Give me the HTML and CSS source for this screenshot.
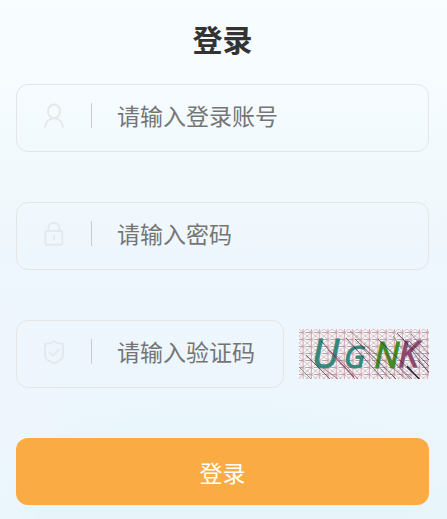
FILE: index.html
```
<!DOCTYPE html>
<html lang="zh-CN">
<head>
  <meta charset="UTF-8">
  <meta name="viewport" content="width=device-width, initial-scale=1.0">
  <title>登录</title>
  <link rel="stylesheet" href="styles.css">
</head>
<body>
  <main class="login">
    <h1 class="login-title">登录</h1>
    <form class="login-form">
      <div class="field">
        <label class="field-icon" for="account" aria-label="登录账号">
          <svg width="22" height="26" viewBox="0 0 22 26">
            <ellipse cx="11" cy="8.3" rx="6" ry="6.9"/>
            <path d="M2 24.5C2.6 18.6 6.2 15.2 11 15.2S19.4 18.6 20 24.5"/>
          </svg>
        </label>
        <input type="text" id="account" placeholder="请输入登录账号">
      </div>

      <div class="field">
        <label class="field-icon" for="password" aria-label="密码">
          <svg width="22" height="26" viewBox="0 0 22 26">
            <rect x="2.3" y="10" width="17" height="13.8" rx="1.8"/>
            <path d="M5.5 10V7a5 5 0 0 1 5-5h1a5 5 0 0 1 5 5v3M11 14v5.5"/>
          </svg>
        </label>
        <input type="password" id="password" placeholder="请输入密码">
      </div>

      <div class="code-row">
        <div class="field">
          <label class="field-icon" for="code" aria-label="验证码">
            <svg width="22" height="26" viewBox="0 0 22 26">
              <path d="M11 2.2C8.2 4.2 5.2 5 2 5V15.5C2 20 6.2 22.8 11 24.2C15.8 22.8 20 20 20 15.5V5C16.8 5 13.8 4.2 11 2.2Z"/>
              <path d="M6.2 13L9.8 16.6L16.6 10"/>
            </svg>
          </label>
          <input type="text" id="code" placeholder="请输入验证码">
        </div>
        <svg class="captcha" viewBox="0 0 130 50">
          <defs>
            <pattern id="mesh" width="8.3" height="7" patternUnits="userSpaceOnUse">
              <path d="M0 3.5H8.3" stroke="#b3a3aa" stroke-width="1" stroke-dasharray="5 1.5"/>
              <path d="M0 0L4 3.5L8.3 0M0 7L4 3.5L8.3 7" fill="none" stroke="#b8a9b0" stroke-width=".7"/>
              <path d="M4 0V7" stroke="#cf9bac" stroke-width="1"/>
            </pattern>
          </defs>
          <rect width="130" height="50" fill="#fbf7f9"/>
          <rect width="130" height="50" fill="url(#mesh)"/>
          <g class="captcha-text">
            <text x="13" y="39" font-size="40" fill="#36877b" stroke="#36877b">U</text>
            <text x="45" y="39" font-size="31" fill="#36877b" stroke="#36877b">G</text>
            <text x="75" y="39" font-size="36" fill="#3d8c22" stroke="#3d8c22">N</text>
            <text x="99" y="38" font-size="37" fill="#8b476d" stroke="#8b476d">K</text>
          </g>
          <g fill="none" stroke-width=".7">
            <path stroke="#33283f" d="M7 26L31 50M22 12L55 48M47 9L84 50M56 10L97 50M79 10L120 50M98 4L130 37"/>
            <path stroke="#a33b5c" d="M24 39L39 50M29 21L56 50M36 25L59 50"/>
            <path stroke="#795268" d="M61 16L91 50M65 15L107 50M86 24L111 50M96 34L113 50M112 5L130 25"/>
            <path stroke="#8e8550" d="M51 2L80 29"/>
            <path stroke="#54845c" d="M0 38L12 50M94 7L103 20"/>
            <path stroke="#483458" d="M104 10L130 44M110 12L130 31M108 39L121 50M119 32L130 43"/>
            <path stroke="#241a38" stroke-width="1.2" d="M108 37L120 50"/>
            <path stroke="#795b88" d="M106 20L122 10"/>
          </g>
        </svg>
      </div>

      <button class="login-btn" type="submit">登录</button>
    </form>
  </main>
</body>
</html>
```
FILE: styles.css
```
* {
  box-sizing: border-box;
}
body {
  margin: 0;
  min-height: 100vh;
  font-family: "Noto Sans CJK SC", sans-serif;
  background:
    radial-gradient(ellipse 270px 150px at 48% 530px, rgba(230, 245, 251, 0.6) 70%, transparent 100%),
    radial-gradient(circle 190px at -130px 430px, rgba(240, 246, 254, 0.6) 96%, transparent 100%),
    linear-gradient(#f8fdff 0, #f5fbff 90px, #f1f9fc 185px, #eef6fe 270px, #edf6fd 370px, #e9f5fb 100%);
}
.login {
  padding: 16px 18px 15px 16px;
}
.login-title {
  margin: 0 0 24px;
  font-size: 30px;
  line-height: 44px;
  text-align: center;
  color: #333;
}
.login-form {
  display: flex;
  flex-direction: column;
  gap: 50px;
}
.field {
  display: flex;
  flex: 1;
  align-items: center;
  min-width: 0;
  height: 68px;
  min-height: 68px;
  padding: 0 24px 0 26px;
  border: 1px solid #e5e5e5;
  border-radius: 12px;
}
.field-icon {
  display: flex;
  align-items: center;
  height: 25px;
  margin-bottom: 5px;
  padding-right: 26px;
  border-right: 1px solid #ccc;
}
.field-icon svg {
  fill: none;
  stroke: #e6e8ea;
  stroke-width: 2;
}
.field input {
  flex: 1;
  min-width: 0;
  height: 100%;
  margin-left: 25px;
  padding: 0 0 6px;
  border: none;
  outline: none;
  background: none;
  font-family: inherit;
  font-size: 23px;
  color: #333;
}
.field input::placeholder {
  color: #757575;
}
.code-row {
  display: flex;
  align-items: center;
  gap: 15px;
}
.captcha {
  width: 130px;
  height: 50px;
  cursor: pointer;
}
.captcha-text {
  font-family: "Open Sans", "Noto Sans", sans-serif;
  font-style: italic;
}
.login-btn {
  height: 67px;
  padding: 0;
  border: none;
  border-radius: 12px;
  background-color: #faab44;
  font-family: inherit;
  font-size: 23px;
  color: #fff;
  cursor: pointer;
}
```
